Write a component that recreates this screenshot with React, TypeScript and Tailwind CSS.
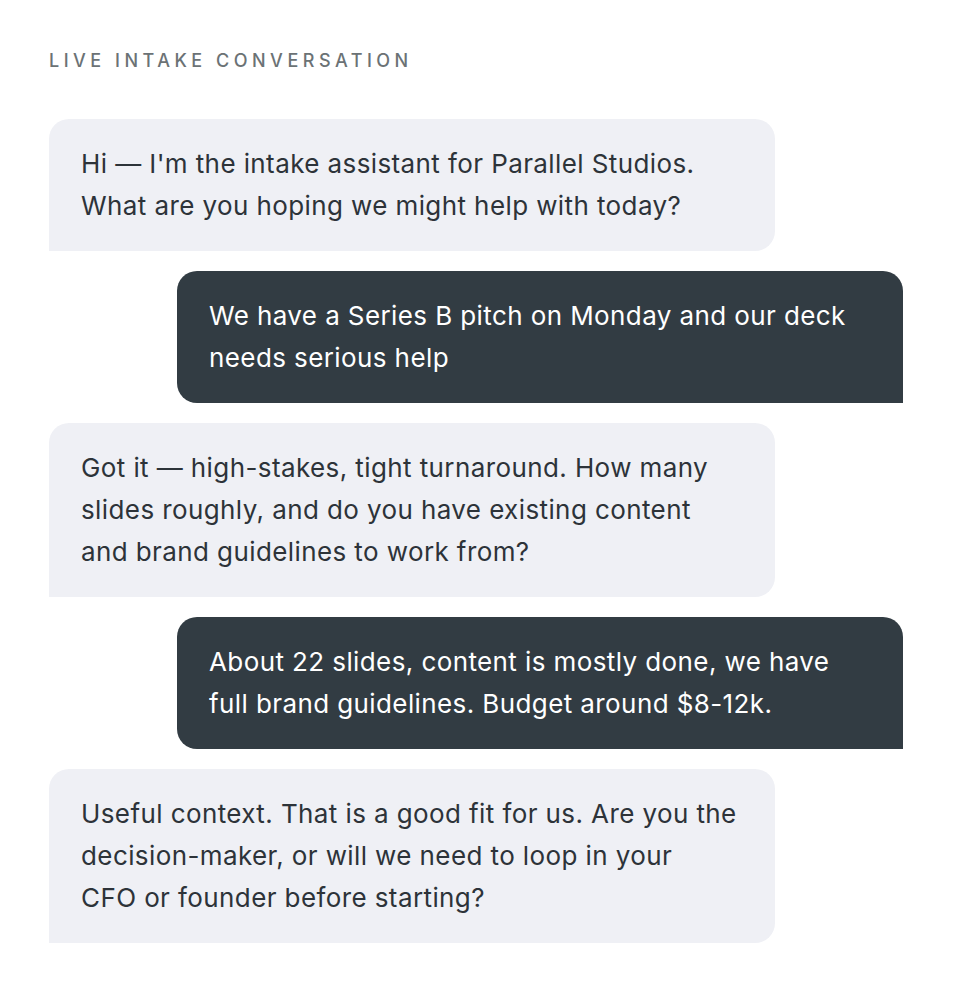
import React from "react";

type Msg = { from: "bot" | "user"; lines: string[] };

const messages: Msg[] = [
  {
    from: "bot",
    lines: [
      "Hi — I'm the intake assistant for Parallel Studios.",
      "What are you hoping we might help with today?",
    ],
  },
  {
    from: "user",
    lines: ["We have a Series B pitch on Monday and our deck", "needs serious help"],
  },
  {
    from: "bot",
    lines: [
      "Got it — high-stakes, tight turnaround. How many",
      "slides roughly, and do you have existing content",
      "and brand guidelines to work from?",
    ],
  },
  {
    from: "user",
    lines: [
      "About 22 slides, content is mostly done, we have",
      "full brand guidelines. Budget around $8-12k.",
    ],
  },
  {
    from: "bot",
    lines: [
      "Useful context. That is a good fit for us. Are you the",
      "decision-maker, or will we need to loop in your",
      "CFO or founder before starting?",
    ],
  },
];

const App = () => {
  return (
    <div className="min-h-[998px] w-full bg-white font-['Inter','Liberation_Sans',sans-serif]">
      <div className="pl-[49px] pr-[51px] pt-[49px]">
        <h2 className="text-[18px] leading-6 font-medium tracking-[0.25em] text-[#6b7275] uppercase">
          Live intake conversation
        </h2>

        <div className="mt-[46px] flex flex-col gap-5">
          {messages.map((m, i) => (
            <div
              key={i}
              className={`flex ${m.from === "user" ? "justify-end" : "justify-start"}`}
            >
              <div
                className={
                  m.from === "user"
                    ? "w-[726px] rounded-[20px] rounded-br-none bg-[#323c43] px-8 py-6 text-[26px] leading-[42px] tracking-[0.4px] text-white"
                    : "w-[726px] rounded-[20px] rounded-bl-none bg-[#eff0f5] px-8 py-6 text-[26px] leading-[42px] tracking-[0.4px] text-[#2d3339]"
                }
              >
                {m.lines.map((l, j) => (
                  <span key={j} className="block whitespace-nowrap">
                    {l}
                  </span>
                ))}
              </div>
            </div>
          ))}
        </div>
      </div>
    </div>
  );
};

export default App;
